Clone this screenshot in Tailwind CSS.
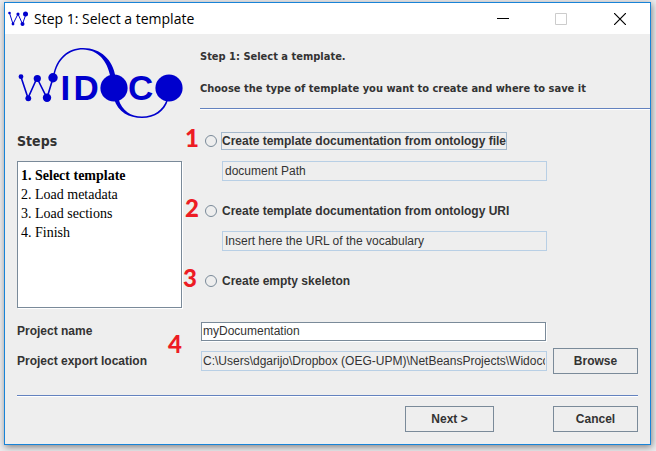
<!DOCTYPE html>
<html lang="en">
<head>
<meta charset="utf-8">
<meta name="viewport" content="width=device-width, initial-scale=1">
<title>Step 1: Select a template</title>
<script src="https://cdn.jsdelivr.net/npm/@tailwindcss/browser@4"></script>
</head>
<body class="flex min-h-screen bg-[#ececee] pt-0.5 pr-[5px] pb-1.5 pl-1 font-['Liberation_Sans',Arial,sans-serif] text-xs text-[#333333]">
<div class="flex flex-1 flex-col border border-[#1883d7] bg-[#eeeeee] shadow-[1px_2px_7px_rgba(0,0,0,0.45)]">

  <header class="flex h-[31px] items-center bg-white pl-[3px] text-black">
    <svg class="h-4 w-5" viewBox="0 0 20 16" fill="#0000cd" aria-hidden="true">
      <path d="M1.500 2 5 13 10 3 14.500 13 18 3" fill="none" stroke="#0000cd" stroke-width="1"/>
      <circle cx="1.500" cy="2" r="1.300"/><circle cx="5" cy="13" r="1.400"/><circle cx="10" cy="3" r="1.600"/><circle cx="14.500" cy="13" r="2"/><circle cx="17.500" cy="3" r="2.500"/>
    </svg>
    <h1 class="ml-1.5 flex-1 font-['Open_Sans','Segoe_UI',sans-serif] text-sm leading-5">Step 1: Select a template</h1>
    <button type="button" aria-label="Minimize" class="flex h-full w-[58px] items-center justify-center">
      <svg class="h-3 w-3" viewBox="0 0 12 12" shape-rendering="crispEdges"><path d="M0 5h12v1H0z"/></svg>
    </button>
    <button type="button" disabled aria-label="Maximize" class="flex h-full w-[58px] items-center justify-center">
      <svg class="h-3 w-3" viewBox="0 0 12 12" fill="none" stroke="#cccccc"><path d="M.5.5h11v11H.5z"/></svg>
    </button>
    <button type="button" aria-label="Close" class="mr-px flex h-full w-[59px] items-center justify-center">
      <svg class="h-3 w-3" viewBox="0 0 12 12" fill="none" stroke="#000" stroke-width="1.200"><path d="M0 0 12 12M12 0 0 12"/></svg>
    </button>
  </header>

  <div class="flex">
    <aside class="w-[195px] shrink-0 pl-3">
      <svg class="mt-3 h-[74px] w-[168px]" viewBox="17 46 168 74" fill="#0000cd" role="img" aria-label="Widoco">
        <path d="M21 77 28 98 37 78 47 98 53 78" fill="none" stroke="#0000cd" stroke-width="1.600"/>
        <circle cx="21" cy="76.700" r="2.400"/><circle cx="28.300" cy="98.300" r="2.900"/><circle cx="37.300" cy="78.500" r="3.600"/><circle cx="47" cy="97.700" r="4.200"/><circle cx="53" cy="77.700" r="4.700"/>
        <path d="M53 76C56 58 68 48 83 48C101 48 113 60 115.500 77L110.500 77C107 60 98 50 83 49.500C69 49.500 57.500 59 54.500 76Z"/>
        <path d="M114 99C118 112 129 118 142 118C155 118 165 111 168 100L166.500 100C163 110 154 116.500 142 116.500C131 116.500 122 111 118.500 99Z"/>
        <circle cx="114" cy="88" r="13.600"/><circle cx="169" cy="88" r="13.600"/>
        <g font-family="Liberation Sans, Arial, sans-serif" font-weight="700" font-size="35"><text x="60.500" y="100">I</text><text x="73.500" y="100">D</text><text x="128" y="100">C</text></g>
      </svg>
      <h2 class="mt-3 font-['DejaVu_Sans_Condensed','DejaVu_Sans',Tahoma,sans-serif] text-sm leading-[18px] font-bold">Steps</h2>
      <ol class="mt-[11px] h-[147px] w-[165px] border border-[#7a8a99] bg-white pt-1 pl-[3px] font-['Liberation_Serif','Times_New_Roman',serif] text-sm leading-[19px] text-black shadow-[1px_1px_0_white]">
        <li class="font-bold" aria-current="step">1. Select template</li>
        <li>2. Load metadata</li>
        <li>3. Load sections</li>
        <li>4. Finish</li>
      </ol>
    </aside>

    <main class="min-w-0 flex-1">
      <div class="border-b border-[#6382bf] pt-[15px] pb-[11px] font-['DejaVu_Sans_Condensed','DejaVu_Sans',Tahoma,sans-serif] text-[11px] leading-4 font-bold shadow-[0_1px_0_white]">
        <p>Step 1: Select a template.</p>
        <p class="mt-4">Choose the type of template you want to create and where to save it</p>
      </div>
      <div role="radiogroup" aria-label="Template type" class="flex flex-col gap-[21px] pt-[23px] pr-[103px] pl-[5px]">
        <div>
          <div class="relative flex h-[18px] items-center gap-1">
            <span class="absolute -top-1.5 -left-5 font-['Lato',Calibri,sans-serif] text-2xl leading-6 font-black text-[#ed1c24]">1</span>
            <input id="from-file" name="template" type="radio" class="size-3 appearance-none rounded-full border border-[#7a8a99] checked:bg-[#333333]">
            <label for="from-file" class="border border-[#a3b8cc] leading-4 font-bold whitespace-nowrap">Create template documentation from ontology file</label>
          </div>
          <div class="mt-[11px] pl-[17px]"><input type="text" readonly aria-label="Document path" value="document Path" class="block h-5 w-full border border-[#b8cfe5] px-0.5 text-xs"></div>
        </div>
        <div>
          <div class="relative flex h-[18px] items-center gap-1">
            <span class="absolute -top-1.5 -left-5 font-['Lato',Calibri,sans-serif] text-2xl leading-6 font-black text-[#ed1c24]">2</span>
            <input id="from-uri" name="template" type="radio" class="size-3 appearance-none rounded-full border border-[#7a8a99] checked:bg-[#333333]">
            <label for="from-uri" class="border border-transparent leading-4 font-bold whitespace-nowrap">Create template documentation from ontology URI</label>
          </div>
          <div class="mt-[11px] pl-[17px]"><input type="text" readonly aria-label="Vocabulary URL" value="Insert here the URL of the vocabulary" class="block h-5 w-full border border-[#b8cfe5] px-0.5 text-xs"></div>
        </div>
        <div class="relative flex h-[18px] items-center gap-1">
          <span class="absolute -top-1.5 -left-[22px] font-['Lato',Calibri,sans-serif] text-2xl leading-6 font-black text-[#ed1c24]">3</span>
          <input id="empty" name="template" type="radio" class="size-3 appearance-none rounded-full border border-[#7a8a99] checked:bg-[#333333]">
          <label for="empty" class="border border-transparent leading-4 font-bold whitespace-nowrap">Create empty skeleton</label>
        </div>
      </div>
    </main>
  </div>

  <div class="relative mt-[10px] grid grid-cols-[178px_minmax(0,1fr)_85px] items-center gap-x-1.5 gap-y-1 px-3">
    <span class="absolute top-3.5 left-[163px] font-['Lato',Calibri,sans-serif] text-2xl leading-6 font-black text-[#ed1c24]">4</span>
    <label for="project-name" class="font-bold">Project name</label>
    <div class="flex h-[26px] items-center"><input id="project-name" type="text" value="myDocumentation" class="mr-px h-[19px] w-full border border-[#7a8a99] bg-white px-px text-xs shadow-[1px_1px_0_white]"></div>
    <span></span>
    <label for="export-location" class="font-bold">Project export location</label>
    <input id="export-location" type="text" readonly value="C:\Users\dgarijo\Dropbox (OEG-UPM)\NetBeansProjects\Widoco" class="h-5 w-full border border-[#b8cfe5] px-px text-xs">
    <button type="button" class="h-[26px] border border-[#7a8a99] font-bold">Browse</button>
  </div>

  <hr class="mx-3 mt-[21px] border-[#6382bf] shadow-[0_1px_0_white]">
  <footer class="flex justify-end gap-[59px] px-3 pt-2.5 pb-3">
    <button type="button" class="h-[26px] w-[89px] border border-[#7a8a99] font-bold">Next &gt;</button>
    <button type="button" class="h-[26px] w-[85px] border border-[#7a8a99] font-bold">Cancel</button>
  </footer>
</div>
</body>
</html>
